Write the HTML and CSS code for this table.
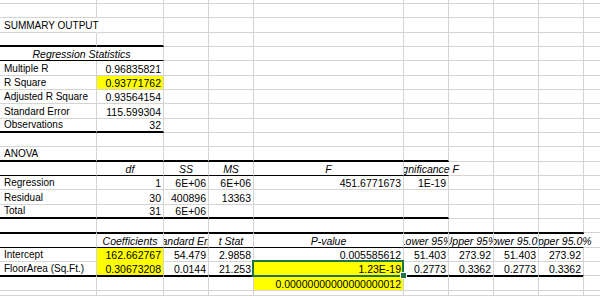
FILE: index.html
```html
<!DOCTYPE html>
<html>
<head>
<meta charset="utf-8">
<link rel="stylesheet" href="styles.css">
</head>
<body>
<div class="sheet">
  <div class="row h4"><div class="c"></div><div class="c"></div><div class="c"></div><div class="c"></div><div class="c"></div><div class="c"></div><div class="c"></div><div class="c"></div><div class="c"></div><div class="c j"></div></div>
  <div class="row h14"><div class="c"></div><div class="c"></div><div class="c"></div><div class="c"></div><div class="c"></div><div class="c"></div><div class="c"></div><div class="c"></div><div class="c"></div><div class="c j"></div></div>
  <div class="row h15"><div class="c lab over nr">SUMMARY OUTPUT</div><div class="c"></div><div class="c"></div><div class="c"></div><div class="c"></div><div class="c"></div><div class="c"></div><div class="c"></div><div class="c"></div><div class="c j"></div></div>
  <div class="row h14"><div class="c tk"></div><div class="c tk"></div><div class="c"></div><div class="c"></div><div class="c"></div><div class="c"></div><div class="c"></div><div class="c"></div><div class="c"></div><div class="c j"></div></div>
  <div class="row h14"><div class="c hd span2 bk">Regression Statistics</div><div class="c"></div><div class="c"></div><div class="c"></div><div class="c"></div><div class="c"></div><div class="c"></div><div class="c"></div><div class="c j"></div></div>
  <div class="row h15"><div class="c lab">Multiple R</div><div class="c num">0.96835821</div><div class="c"></div><div class="c"></div><div class="c"></div><div class="c"></div><div class="c"></div><div class="c"></div><div class="c"></div><div class="c j"></div></div>
  <div class="row h14"><div class="c lab">R Square</div><div class="c num y">0.93771762</div><div class="c"></div><div class="c"></div><div class="c"></div><div class="c"></div><div class="c"></div><div class="c"></div><div class="c"></div><div class="c j"></div></div>
  <div class="row h14"><div class="c lab">Adjusted R Square</div><div class="c num">0.93564154</div><div class="c"></div><div class="c"></div><div class="c"></div><div class="c"></div><div class="c"></div><div class="c"></div><div class="c"></div><div class="c j"></div></div>
  <div class="row h15"><div class="c lab">Standard Error</div><div class="c num">115.599304</div><div class="c"></div><div class="c"></div><div class="c"></div><div class="c"></div><div class="c"></div><div class="c"></div><div class="c"></div><div class="c j"></div></div>
  <div class="row h14"><div class="c lab tk">Observations</div><div class="c num tk">32</div><div class="c"></div><div class="c"></div><div class="c"></div><div class="c"></div><div class="c"></div><div class="c"></div><div class="c"></div><div class="c j"></div></div>
  <div class="row h14"><div class="c"></div><div class="c"></div><div class="c"></div><div class="c"></div><div class="c"></div><div class="c"></div><div class="c"></div><div class="c"></div><div class="c"></div><div class="c j"></div></div>
  <div class="row h15"><div class="c lab tk">ANOVA</div><div class="c tk"></div><div class="c tk"></div><div class="c tk"></div><div class="c tk"></div><div class="c tk"></div><div class="c"></div><div class="c"></div><div class="c"></div><div class="c j"></div></div>
  <div class="row h14"><div class="c bk"></div><div class="c hd bk">df</div><div class="c hd bk">SS</div><div class="c hd bk">MS</div><div class="c hd bk">F</div><div class="c hd bk spill nr">Significance F</div><div class="c"></div><div class="c"></div><div class="c"></div><div class="c j"></div></div>
  <div class="row h14"><div class="c lab">Regression</div><div class="c num">1</div><div class="c num">6E+06</div><div class="c num">6E+06</div><div class="c num">451.6771673</div><div class="c num">1E-19</div><div class="c"></div><div class="c"></div><div class="c"></div><div class="c j"></div></div>
  <div class="row h15"><div class="c lab">Residual</div><div class="c num">30</div><div class="c num">400896</div><div class="c num">13363</div><div class="c"></div><div class="c"></div><div class="c"></div><div class="c"></div><div class="c"></div><div class="c j"></div></div>
  <div class="row h14"><div class="c lab tk">Total</div><div class="c num tk">31</div><div class="c num tk">6E+06</div><div class="c tk"></div><div class="c tk"></div><div class="c tk"></div><div class="c"></div><div class="c"></div><div class="c"></div><div class="c j"></div></div>
  <div class="row h14"><div class="c tk2"></div><div class="c tk2"></div><div class="c tk2"></div><div class="c tk2"></div><div class="c tk2"></div><div class="c tk2"></div><div class="c tk2"></div><div class="c tk2"></div><div class="c tk2"></div><div class="c j"></div></div>
  <div class="row h15"><div class="c bk"></div><div class="c hd bk">Coefficients</div><div class="c hd bk">Standard Error</div><div class="c hd bk">t Stat</div><div class="c hd bk">P-value</div><div class="c hd bk">Lower 95%</div><div class="c hd bk">Upper 95%</div><div class="c hd bk">Lower 95.0%</div><div class="c hd bk spill nr">Upper 95.0%</div><div class="c j"></div></div>
  <div class="row h14"><div class="c lab">Intercept</div><div class="c num y yb">162.662767</div><div class="c num">54.479</div><div class="c num">2.9858</div><div class="c num">0.005585612</div><div class="c num">51.403</div><div class="c num">273.92</div><div class="c num">51.403</div><div class="c num">273.92</div><div class="c j"></div></div>
  <div class="row h14"><div class="c lab tk2">FloorArea (Sq.Ft.)</div><div class="c num y tk2">0.30673208</div><div class="c num tk2">0.0144</div><div class="c num tk2">21.253</div><div class="c num y tk2 sel">1.23E-19</div><div class="c num tk2">0.2773</div><div class="c num tk2">0.3362</div><div class="c num tk2">0.2773</div><div class="c num tk2">0.3362</div><div class="c j"></div></div>
  <div class="row h15"><div class="c"></div><div class="c"></div><div class="c"></div><div class="c"></div><div class="c num y">0.00000000000000000012</div><div class="c"></div><div class="c"></div><div class="c"></div><div class="c"></div><div class="c j"></div></div>
  <div class="row h5"><div class="c"></div><div class="c"></div><div class="c"></div><div class="c"></div><div class="c"></div><div class="c"></div><div class="c"></div><div class="c"></div><div class="c"></div><div class="c j"></div></div>
</div>
</body>
</html>
```

FILE: styles.css
```css
html, body {
  margin: 0;
  padding: 0;
  background: #ffffff;
}

.sheet {
  width: 600px;
  height: 296px;
  overflow: hidden;
  font-family: "Liberation Sans", Arial, sans-serif;
  color: #000;
}

.row {
  display: grid;
  grid-template-columns: 97px 67px 45px 45px 150px 45px 45px 45px 45px 16px;
}

.h4 { height: 4px; }
.h5 { height: 5px; }
.h14 { height: 14px; }
.h15 { height: 15px; }

.c {
  box-sizing: border-box;
  border-right: 1px solid #d4d4d4;
  border-bottom: 1px solid #d4d4d4;
  display: flex;
  align-items: flex-end;
  overflow: hidden;
  white-space: nowrap;
  font-size: 10px;
  line-height: 12px;
  padding: 0;
}

.j { border-right: none; }

.lab {
  justify-content: flex-start;
  padding-left: 4px;
}

.num {
  justify-content: flex-end;
  padding-right: 2px;
  font-size: 10.5px;
}

.hd {
  justify-content: center;
  font-style: italic;
  font-size: 10.5px;
}

.span2 { grid-column: span 2; }

.over { overflow: visible; }

.nr { border-right-color: transparent; }

.spill {
  overflow: visible;
  clip-path: inset(0 -80px 0 0);
}

.y { background: #ffff00; }
.yb { border-bottom-color: #ffff00; }

.bk { border-bottom-color: #000; }

.tk { border-bottom: 2px solid #000; }

.tk2 {
  border-bottom-color: #000;
  box-shadow: 0 1px 0 #000;
}

.sel {
  position: relative;
  overflow: visible;
}

.sel::before {
  content: "";
  position: absolute;
  left: -2px;
  top: -2px;
  width: 152px;
  height: 17px;
  box-sizing: border-box;
  border: 2px solid #217346;
}

.sel::after {
  content: "";
  position: absolute;
  left: 146px;
  top: 10px;
  width: 7px;
  height: 7px;
  box-sizing: border-box;
  background: #217346;
  border: 1px solid #ffffff;
}
```
